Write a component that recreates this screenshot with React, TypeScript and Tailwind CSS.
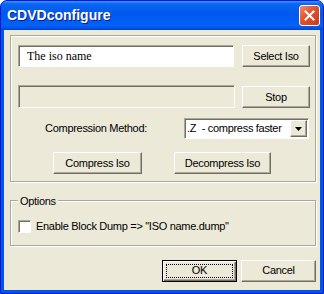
import React from 'react';

const ui = "font-['Liberation_Sans',Arial,sans-serif] text-[11px] tracking-[-0.3px] text-black";
const raised =
  'border border-t-white border-l-white border-r-[#716F64] border-b-[#716F64] shadow-[inset_-1px_-1px_0_#ACA899] bg-[#ECE9D8]';
const sunken =
  'border border-t-[#ACA899] border-l-[#ACA899] border-b-white border-r-white shadow-[inset_1px_1px_0_#716F64]';
const etched = 'border border-[#ACA899] shadow-[inset_1px_1px_0_white,1px_1px_0_white]';

function Btn({ label, className = '' }: { label: string; className?: string }) {
  return (
    <button className={`${raised} ${ui} h-[22px] flex items-center justify-center ${className}`}>
      {label}
    </button>
  );
}

export default function App() {
  return (
    <div className="w-[324px] h-[294px] rounded-t-[7px] bg-[#0055EA] border border-[#0019CF] flex flex-col overflow-hidden">
      {/* title bar */}
      <div className="h-[29px] shrink-0 flex items-center justify-between pl-[6px] pr-[3px] bg-[linear-gradient(to_bottom,#3D95FF_0%,#0A66F0_10%,#0058EE_45%,#0062F7_85%,#0050E0_95%,#0040CC_100%)]">
        <span className="font-['Liberation_Sans',Arial,sans-serif] font-bold text-[14px] text-white [text-shadow:1px_1px_0_#0A1F80]">
          CDVDconfigure
        </span>
        <div className="w-[21px] h-[21px] rounded-[3px] border border-white bg-[linear-gradient(135deg,#F08A6B_0%,#E0532C_45%,#C8391A_100%)] flex items-center justify-center">
          <svg width="11" height="11" viewBox="0 0 11 11">
            <path d="M1.5 1.5 L9.5 9.5 M9.5 1.5 L1.5 9.5" stroke="white" strokeWidth="2" strokeLinecap="square" />
          </svg>
        </div>
      </div>

      {/* body */}
      <div className="flex-1 mx-[3px] mb-[3px] bg-[#ECE9D8] flex flex-col pl-[6px]">
        {/* group 1 */}
        <div className={`${etched} mt-[5px] w-[306px] pl-[7px] pt-[9px] pb-[7px] flex flex-col`}>
          <div className="flex gap-[8px]">
            <div className={`${sunken} bg-white w-[216px] h-[22px] flex items-center pl-[8px] font-['Liberation_Serif','Times_New_Roman',serif] text-[12px] text-black`}>
              The iso name
            </div>
            <Btn label="Select Iso" className="w-[68px]" />
          </div>
          <div className="flex gap-[7px] mt-[18px]">
            <div className={`${sunken} w-[217px] h-[23px]`} />
            <Btn label="Stop" className="w-[68px] mt-[1px] h-[21px]" />
          </div>
          <div className="flex items-center mt-[10px]">
            <div className={`${ui} w-[129px] text-right`}>Compression Method:</div>
            <div className={`${sunken} bg-white ml-[37px] w-[125px] h-[21px] flex items-center justify-between pl-[2px] pr-[1px]`}>
              <span className={ui}>.Z&nbsp; - compress faster</span>
              <div className={`${raised} w-[17px] h-[17px] flex items-center justify-center`}>
                <svg width="7" height="4" viewBox="0 0 7 4">
                  <path d="M0 0 H7 L3.5 4 Z" fill="black" />
                </svg>
              </div>
            </div>
          </div>
          <div className="flex mt-[13px] pl-[35px] gap-[32px]">
            <Btn label="Compress Iso" className="w-[89px]" />
            <Btn label="Decompress Iso" className="w-[97px]" />
          </div>
        </div>

        {/* options group */}
        <div className={`${etched} relative mt-[18px] w-[306px] pl-[7px] pt-[17px] pb-[10px] flex items-center gap-[5px]`}>
          <span className={`${ui} absolute -top-[8px] left-[7px] px-[2px] bg-[#ECE9D8]`}>Options</span>
          <div className={`${sunken} bg-white w-[13px] h-[13px]`} />
          <span className={ui}>Enable Block Dump =&gt; "ISO name.dump"</span>
        </div>

        {/* bottom buttons */}
        <div className="flex justify-end gap-[4px] mt-[14px] w-[306px]">
          <button className={`${ui} relative w-[75px] h-[22px] bg-[#ECE9D8] border border-black shadow-[inset_1px_1px_0_white,inset_-1px_-1px_0_#716F64,inset_-2px_-2px_0_#ACA899]`}>
            <span className="absolute inset-[3px] border border-dotted border-black" />
            OK
          </button>
          <Btn label="Cancel" className="w-[75px]" />
        </div>
      </div>
    </div>
  );
}
